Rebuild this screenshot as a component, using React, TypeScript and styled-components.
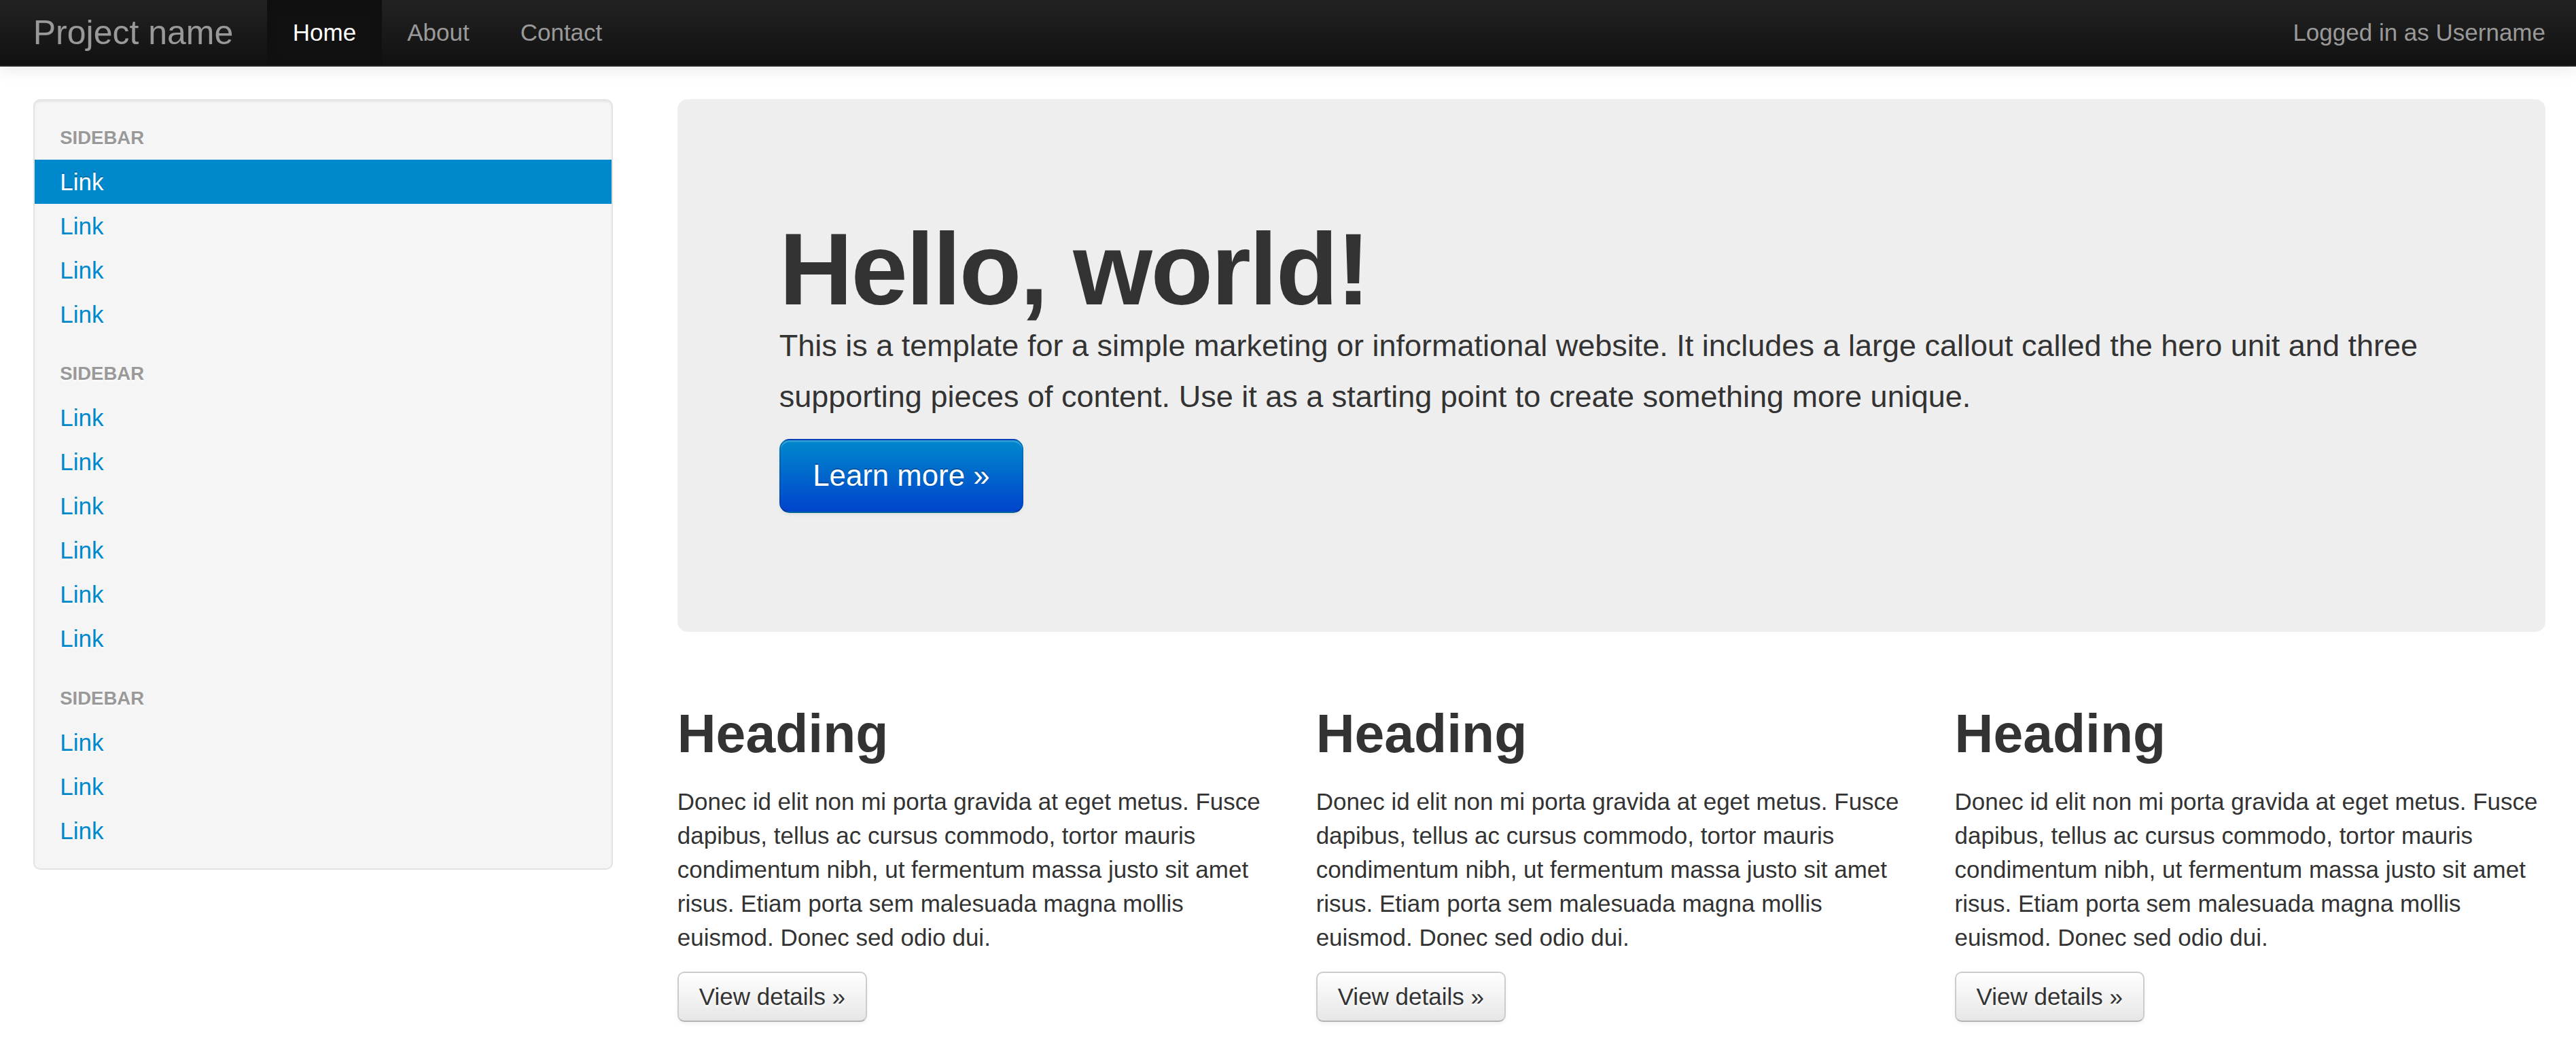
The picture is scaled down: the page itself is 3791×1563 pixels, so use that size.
import React from 'react';
import styled, { createGlobalStyle } from 'styled-components';

const GlobalStyle = createGlobalStyle`
  html, body {
    margin: 0;
    padding: 0;
    background: #fff;
  }
  * {
    box-sizing: content-box;
  }
`;

// the whole page is a bootstrap 2 fluid layout, drawn at 2.5x
const Page = styled.div`
  zoom: 2.5;
  font-family: "Liberation Sans", Arial, sans-serif;
  font-size: 14px;
  line-height: 20px;
  color: #333;
`;

const NavBar = styled.header`
  display: flex;
  align-items: stretch;
  min-height: 38.2px;
  padding: 0 18px 0 19.5px;
  background-color: #1b1b1b;
  background-image: linear-gradient(to bottom, #222222, #111111);
  border-bottom: 1px solid #252525;
  box-shadow: 0 1px 10px rgba(0, 0, 0, 0.1);
`;

const Brand = styled.a`
  display: block;
  padding: 9.1px 20px;
  margin-left: -20px;
  font-size: 20px;
  font-weight: 200;
  line-height: 20px;
  color: #999;
  text-decoration: none;
`;

const NavItems = styled.ul`
  display: flex;
  margin: 0 10px 0 0;
  padding: 0;
  list-style: none;
`;

const NavLink = styled.a<{ $active?: boolean }>`
  display: block;
  padding: 9.1px 15px;
  color: ${p => (p.$active ? '#fff' : '#999')};
  background-color: ${p => (p.$active ? '#111' : 'transparent')};
  box-shadow: ${p => (p.$active ? 'inset 0 3px 8px rgba(0, 0, 0, 0.125)' : 'none')};
  text-decoration: none;
`;

const NavText = styled.p`
  margin: 0 0 0 auto;
  line-height: 38.2px;
  color: #999;
`;

const NavTextLink = styled.a`
  color: #999;
  text-decoration: none;
`;

const Main = styled.div`
  padding: 19.2px 18px 0 19.5px;
`;

const Layout = styled.div`
  display: grid;
  grid-template-columns: 23.076923% 74.358974%;
  column-gap: 2.564102%;
  align-items: start;
`;

const Well = styled.div`
  padding: 9px 0;
  margin-bottom: 20px;
  background-color: #f5f5f5;
  border: 1px solid #e3e3e3;
  border-radius: 4px;
  box-shadow: inset 0 1px 1px rgba(0, 0, 0, 0.05);
`;

const SideList = styled.ul`
  margin: 0;
  padding: 0;
  list-style: none;
`;

const SideHeader = styled.li<{ $first?: boolean }>`
  display: block;
  margin-top: ${p => (p.$first ? '0' : '9px')};
  padding: 3px 15px;
  font-size: 11px;
  font-weight: bold;
  line-height: 20px;
  color: #999;
  text-shadow: 0 1px 0 rgba(255, 255, 255, 0.5);
  text-transform: uppercase;
`;

const SideLink = styled.a<{ $active?: boolean }>`
  display: block;
  padding: 3px 15px;
  color: ${p => (p.$active ? '#fff' : '#0088cc')};
  background-color: ${p => (p.$active ? '#0088cc' : 'transparent')};
  text-shadow: ${p => (p.$active ? '0 -1px 0 rgba(0, 0, 0, 0.2)' : '0 1px 0 rgba(255, 255, 255, 0.5)')};
  text-decoration: none;
`;

const Hero = styled.div`
  padding: 60px;
  margin-bottom: 30px;
  font-size: 18px;
  font-weight: 200;
  line-height: 30px;
  background-color: #eeeeee;
  border-radius: 6px;
`;

const HeroTitle = styled.h1`
  margin: 10px 0 0;
  font-size: 60px;
  font-weight: bold;
  line-height: 1;
  letter-spacing: -1px;
`;

const HeroText = styled.p`
  margin: 0 0 10px;
`;

const BigButton = styled.a`
  display: inline-block;
  padding: 11px 19px;
  font-size: 17.5px;
  line-height: 20px;
  color: #fff;
  text-decoration: none;
  text-shadow: 0 -1px 0 rgba(0, 0, 0, 0.25);
  background-color: #006dcc;
  background-image: linear-gradient(to bottom, #0088cc, #0044cc);
  border: 1px solid;
  border-color: rgba(0, 0, 0, 0.1) rgba(0, 0, 0, 0.1) rgba(0, 0, 0, 0.25);
  border-radius: 6px;
  box-shadow: inset 0 1px 0 rgba(255, 255, 255, 0.2), 0 1px 2px rgba(0, 0, 0, 0.05);
  vertical-align: middle;
`;

const Columns = styled.div`
  display: grid;
  grid-template-columns: repeat(3, 31.623931%);
  column-gap: 2.564102%;
`;

const Heading = styled.h2`
  margin: 10px 0;
  font-size: 31.5px;
  font-weight: bold;
  line-height: 40px;
`;

const Text = styled.p`
  margin: 0 0 10px;
`;

const DetailsButton = styled.a`
  display: inline-block;
  padding: 4px 12px;
  font-size: 14px;
  line-height: 20px;
  color: #333;
  text-decoration: none;
  text-shadow: 0 1px 1px rgba(255, 255, 255, 0.75);
  background-color: #f5f5f5;
  background-image: linear-gradient(to bottom, #ffffff, #e6e6e6);
  border: 1px solid #cccccc;
  border-bottom-color: #b3b3b3;
  border-radius: 4px;
  box-shadow: inset 0 1px 0 rgba(255, 255, 255, 0.2), 0 1px 2px rgba(0, 0, 0, 0.05);
  vertical-align: middle;
`;

const groups = [
  { links: 4, active: 0 },
  { links: 6, active: -1 },
  { links: 3, active: -1 },
];

const body =
  'Donec id elit non mi porta gravida at eget metus. Fusce dapibus, tellus ac cursus commodo, tortor mauris condimentum nibh, ut fermentum massa justo sit amet risus. Etiam porta sem malesuada magna mollis euismod. Donec sed odio dui.';

const App: React.FC = () => {
  return (
    <Page>
      <GlobalStyle />
      <NavBar>
        <Brand href="#">Project name</Brand>
        <NavItems>
          <li><NavLink $active href="#">Home</NavLink></li>
          <li><NavLink href="#about">About</NavLink></li>
          <li><NavLink href="#contact">Contact</NavLink></li>
        </NavItems>
        <NavText>
          Logged in as <NavTextLink href="#">Username</NavTextLink>
        </NavText>
      </NavBar>

      <Main>
        <Layout>
          <Well>
            <SideList>
              {groups.map((g, gi) => (
                <React.Fragment key={gi}>
                  <SideHeader $first={gi === 0}>Sidebar</SideHeader>
                  {Array.from({ length: g.links }).map((_, i) => (
                    <li key={i}>
                      <SideLink $active={i === g.active} href="#">Link</SideLink>
                    </li>
                  ))}
                </React.Fragment>
              ))}
            </SideList>
          </Well>

          <div>
            <Hero>
              <HeroTitle>Hello, world!</HeroTitle>
              <HeroText>
                This is a template for a simple marketing or informational website. It includes a large callout called the hero unit and three supporting pieces of content. Use it as a starting point to create something more unique.
              </HeroText>
              <HeroText>
                <BigButton href="#">Learn more &raquo;</BigButton>
              </HeroText>
            </Hero>
            <Columns>
              {[0, 1, 2].map(i => (
                <div key={i}>
                  <Heading>Heading</Heading>
                  <Text>{body}</Text>
                  <Text>
                    <DetailsButton href="#">View details &raquo;</DetailsButton>
                  </Text>
                </div>
              ))}
            </Columns>
          </div>
        </Layout>
      </Main>
    </Page>
  );
};

export default App;
